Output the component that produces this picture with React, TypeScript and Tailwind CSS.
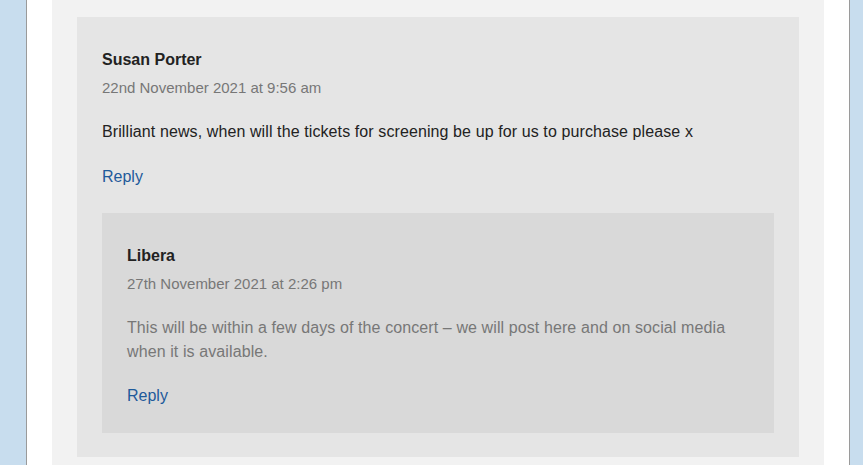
const font = { fontFamily: '"Liberation Sans", Arial, sans-serif' };

type CommentProps = {
  author: string;
  date: string;
  body: string;
  muted?: boolean;
  children?: React.ReactNode;
};

function Comment({ author, date, body, muted, children }: CommentProps) {
  return (
    <div className={`flex flex-col px-[25px] pt-[31px] ${children ? "pb-[24px]" : "pb-[25px]"}`}>
      <div className="text-[16px] leading-[24px] font-bold text-[#222]">{author}</div>
      <div className="mt-[4px] text-[15px] leading-[24px] text-[#777]">{date}</div>
      <p
        className={`mt-[20px] text-[16px] leading-[24px] tracking-[0.1px] ${
          muted ? "text-[#777]" : "text-[#222]"
        }`}
      >
        {body}
      </p>
      <a
        href="#"
        className={`${children ? "mt-[21px]" : "mt-[20px]"} text-[16px] leading-[24px] text-[#1e5a9b] w-fit`}
      >
        Reply
      </a>
      {children && <div className="mt-[24px]">{children}</div>}
    </div>
  );
}

export default function App() {
  return (
    <div className="w-[863px] h-[465px] overflow-hidden bg-[#c8ddee]" style={font}>
      <div className="ml-[26px] w-[824px] h-full border-x border-[#9a9a9a] bg-white px-[25px]">
        <div className="h-full bg-[#f2f2f2] px-[25px] pt-[17px]">
          <div className="bg-[#e5e5e5]">
            <Comment
              author="Susan Porter"
              date="22nd November 2021 at 9:56 am"
              body="Brilliant news, when will the tickets for screening be up for us to purchase please x"
            >
              <div className="bg-[#d9d9d9]">
                <Comment
                  author="Libera"
                  date="27th November 2021 at 2:26 pm"
                  body="This will be within a few days of the concert – we will post here and on social media when it is available."
                  muted
                />
              </div>
            </Comment>
          </div>
        </div>
      </div>
    </div>
  );
}
